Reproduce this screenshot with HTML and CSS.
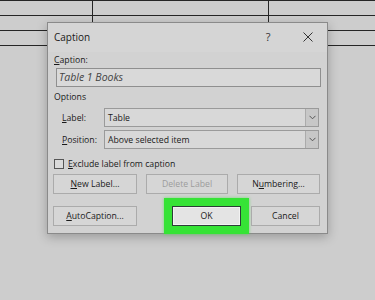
FILE: index.html
```html
<!DOCTYPE html>
<html lang="en">
<head>
  <meta charset="UTF-8" />
  <meta name="viewport" content="width=device-width, initial-scale=1" />
  <title>Caption</title>
  <link rel="stylesheet" href="styles.css">
</head>
<body>

  <table class="doc-table">
    <tr><td class="col-a"></td><td class="col-b"></td><td></td></tr>
    <tr><td></td><td></td><td></td></tr>
    <tr><td></td><td></td><td></td></tr>
  </table>

  <div class="dialog">
    <div class="titlebar">
      <span class="title">Caption</span>
      <span class="help">?</span>
      <svg class="close" width="10" height="10" viewBox="0 0 10 10">
        <path d="M0.5 0.5 L9.5 9.5 M9.5 0.5 L0.5 9.5" stroke="#333" stroke-width="1" fill="none" />
      </svg>
    </div>

    <div class="dialog-body">
      <div class="field-label"><u>C</u>aption:</div>
      <div class="caption-input">Table 1 Books</div>

      <div class="group-label">Options</div>

      <div class="option-row">
        <span class="option-name"><u>L</u>abel:</span>
        <div class="select">
          <span class="select-value">Table</span>
          <span class="select-arrow">
            <svg width="7" height="5" viewBox="0 0 7 5"><path d="M0.5 0.8 L3.5 3.8 L6.5 0.8" stroke="#555" fill="none" /></svg>
          </span>
        </div>
      </div>

      <div class="option-row">
        <span class="option-name"><u>P</u>osition:</span>
        <div class="select">
          <span class="select-value">Above selected item</span>
          <span class="select-arrow">
            <svg width="7" height="5" viewBox="0 0 7 5"><path d="M0.5 0.8 L3.5 3.8 L6.5 0.8" stroke="#555" fill="none" /></svg>
          </span>
        </div>
      </div>

      <label class="check-row">
        <span class="checkbox"></span>
        <span><u>E</u>xclude label from caption</span>
      </label>

      <div class="btn-row">
        <button class="btn w-wide"><u>N</u>ew Label...</button>
        <button class="btn w-mid" disabled>Delete Label</button>
        <button class="btn w-num">N<u>u</u>mbering...</button>
      </div>

      <div class="btn-row last">
        <button class="btn w-wide"><u>A</u>utoCaption...</button>
        <button class="btn ok">OK</button>
        <button class="btn cancel">Cancel</button>
      </div>
    </div>
  </div>

</body>
</html>
```

FILE: styles.css
```css
:root {
  --page: #cdcdcd;
  --panel: #d2d2d2;
  --field: #d9d9d9;
  --text: #1a1a1a;
  --green: #36e336;
}

* {
  box-sizing: border-box;
  margin: 0;
  padding: 0;
}

body {
  font-family: 'Open Sans', 'Liberation Sans', sans-serif;
  font-size: 8.7px;
  color: var(--text);
  background: var(--page);
  width: 375px;
  height: 300px;
  overflow: hidden;
  position: relative;
}

u {
  text-decoration: underline;
  text-underline-offset: 1px;
}

/* document table behind the dialog */
.doc-table {
  border-collapse: collapse;
  table-layout: fixed;
  width: 382px;
  margin-left: -3px;
}

.doc-table td {
  height: 15px;
  border: 1px solid #262626;
}

.col-a { width: 95px; }
.col-b { width: 176px; }

/* dialog window */
.dialog {
  position: absolute;
  left: 47px;
  top: 22px;
  width: 281px;
  height: 212px;
  border: 1px solid #8a8a8a;
  background: var(--panel);
  box-shadow: 0 3px 10px rgba(0, 0, 0, 0.25);
}

.titlebar {
  height: 29px;
  display: flex;
  align-items: center;
  padding: 0 14px 2px 6px;
  background: #d5d5d5;
}

.title {
  flex: 1;
  font-size: 10px;
}

.help {
  font-size: 11px;
  width: 10px;
  text-align: center;
  margin-right: 30px;
  color: #333;
}

.dialog-body {
  padding: 0 5px;
}

.field-label,
.group-label {
  line-height: 14px;
  padding-left: 1px;
}

.field-label {
  margin-top: 1px;
}

.caption-input {
  margin: 1px 0 0 3px;
  width: 265px;
  height: 19px;
  border: 1px solid #8f8f8f;
  background: var(--field);
  font-size: 10.5px;
  font-style: italic;
  color: #444;
  line-height: 17px;
  padding-left: 2px;
}

.group-label {
  margin-top: 3px;
}

.option-row {
  display: flex;
  align-items: center;
  margin-top: 3px;
  height: 19px;
}

.group-label + .option-row {
  margin-top: 4px;
}

.option-name {
  width: 51px;
  padding-left: 9px;
}

.select {
  width: 215px;
  height: 19px;
  border: 1px solid #9a9a9a;
  background: #d8d8d8;
  display: flex;
  align-items: center;
}

.select-value {
  flex: 1;
  padding-left: 3px;
}

.select-arrow {
  width: 13px;
  height: 100%;
  border-left: 1px solid #ababab;
  background: #c7c7c7;
  display: flex;
  align-items: center;
  justify-content: center;
}

.check-row {
  display: flex;
  align-items: center;
  gap: 4px;
  height: 14px;
  margin-top: 8px;
  padding-left: 1px;
}

.checkbox {
  width: 10px;
  height: 10px;
  border: 1px solid #555;
  background: #dadada;
}

.btn-row {
  display: flex;
  gap: 9px;
  margin-top: 3px;
}

.btn-row.last {
  gap: 0;
  margin-top: 12px;
}

.btn {
  height: 20px;
  border: 1px solid #ababab;
  background: #d6d6d6;
  font-family: inherit;
  font-size: 8.7px;
  color: var(--text);
  cursor: pointer;
}

.btn:disabled {
  color: #9c9c9c;
  cursor: default;
}

.w-wide { width: 84px; }
.w-mid { width: 82px; }
.w-num { width: 83px; }

.ok {
  width: 69px;
  margin-left: 35px;
  background: #e4e4e4;
  border: 1px solid #2d3d38;
  box-shadow:
    inset 0 0 0 1px #f2f2f2,
    0 0 0 8px var(--green),
    0 0 3px 8px rgba(54, 227, 54, 0.6);
}

.cancel {
  width: 69px;
  margin-left: 10px;
}
```
